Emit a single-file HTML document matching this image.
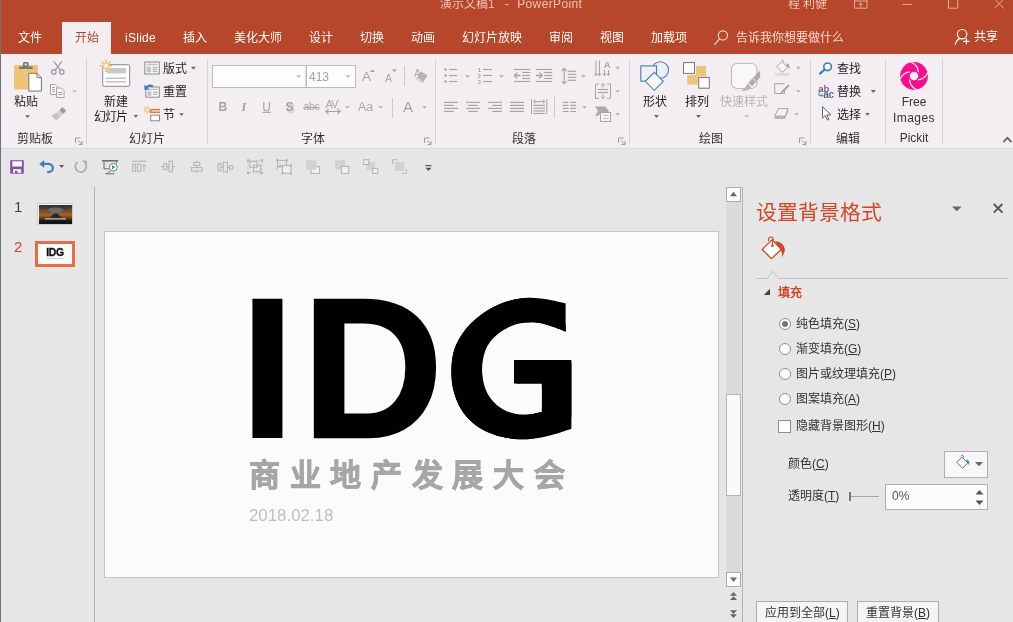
<!DOCTYPE html>
<html lang="zh-CN">
<head>
<meta charset="utf-8">
<title>演示文稿1 - PowerPoint</title>
<style>
*{box-sizing:border-box;margin:0;padding:0}
html,body{width:1013px;height:622px;overflow:hidden}
body{position:relative;background:#e6e6e6;font-family:"Liberation Sans",sans-serif;font-size:12px;color:#262626;line-height:1}
.a{position:absolute;white-space:nowrap}
.c{position:absolute;white-space:nowrap;transform:translateX(-50%);text-align:center}
svg{position:absolute;overflow:visible}
#top{left:0;top:0;width:1013px;height:54px;background:#b7472a}
#ribbon{left:0;top:54px;width:1013px;height:94px;background:#f3eef1}
#ribline{left:0;top:148px;width:1013px;height:1px;background:#dadada}
#lborder{left:0;top:0;width:1px;height:622px;background:#6f7276}
.tab{top:32px;color:#fff;font-size:12px}
.sep{width:1px;background:#d9d3d7;top:59px;height:85px}
.gl{top:133px;font-size:12px;color:#333}
.lb{font-size:12px;color:#1e1e1e}
.dis{color:#aaa}
.arr{width:0;height:0;border-left:3px solid transparent;border-right:3px solid transparent;border-top:3px solid #666}
.arr.g{border-top-color:#b0b0b0}
.pt{font-size:12px;color:#333}
.pt u{text-decoration:underline;text-underline-offset:1px}
.radio{width:12px;height:12px;border-radius:50%;border:1px solid #8e8e8e;background:#fdfdfd}
.btn{border:1px solid #adadad;background:#f4f4f4;height:24px;top:601px}
</style>
</head>
<body>
<div id="root" style="position:absolute;left:0;top:0;width:1013px;height:622px;will-change:transform">
<!-- title bar + tabs -->
<div class="a" id="top"></div>
<div class="a" style="left:440px;top:-2px;font-size:12px;color:#efc4b6" id="ttl">演示文稿1<span style="margin-left:10px">-</span><span style="margin-left:8.5px;letter-spacing:.37px">PowerPoint</span></div>
<div class="a" style="left:788px;top:-2px;font-size:12px;color:#efc4b6">程 利健</div>
<div class="a" style="left:62px;top:22px;width:49px;height:33px;background:#f3eef1"></div>
<div class="c tab" style="left:30px">文件</div>
<div class="c tab" style="left:86.5px;color:#b7472a">开始</div>
<div class="c tab" style="left:140.5px;letter-spacing:.3px">iSlide</div>
<div class="c tab" style="left:194.5px">插入</div>
<div class="c tab" style="left:257.5px">美化大师</div>
<div class="c tab" style="left:320.5px">设计</div>
<div class="c tab" style="left:372px">切换</div>
<div class="c tab" style="left:423px">动画</div>
<div class="c tab" style="left:492px">幻灯片放映</div>
<div class="c tab" style="left:561px">审阅</div>
<div class="c tab" style="left:612px">视图</div>
<div class="c tab" style="left:669px">加载项</div>
<div class="a tab" style="left:736px;color:#f6dcd3">告诉我你想要做什么</div>
<div class="a tab" style="left:974px;top:31px">共享</div>
<!--TOP-ICONS-->
<svg style="left:700px;top:0" width="313" height="54" viewBox="700 0 313 54">
<g fill="none" stroke="#e3ab9b" stroke-width="1">
<path d="M854.500 -1v9.200h12.500V-1M854.500 1h12.500M860.700 7.500V3M858.600 5l2.100-2.100 2.100 2.100"/>
<path d="M902.300 4.400h9.500"/>
<path d="M948.500 -1v9.200h9.300V-1"/>
<path d="M994.300 -1.200l9.700 9.700M1004 -1.200l-9.700 9.700"/>
</g>
<circle cx="722.900" cy="35.400" r="4.600" fill="none" stroke="#f6dcd3" stroke-width="1.200"/><path d="M719.600 38.900l-5.300 6" stroke="#f6dcd3" stroke-width="1.300"/>
<g fill="none" stroke="#fff" stroke-width="1.200"><circle cx="962.100" cy="34.200" r="4.700"/><path d="M955.300 44.800c.4-3.400 2.400-5.400 4.400-6.200M963.200 41.400h6.400M966.400 38.200v6.400"/></g>
</svg>

<!--/TOP-ICONS-->
<!-- ribbon -->
<div class="a" id="ribbon"></div>
<div class="a" id="ribline"></div>
<div class="a sep" style="left:86px"></div>
<div class="a sep" style="left:207px"></div>
<div class="a sep" style="left:435px"></div>
<div class="a sep" style="left:629px"></div>
<div class="a sep" style="left:810px"></div>
<div class="a sep" style="left:885px"></div>
<div class="a sep" style="left:942px"></div>
<div class="c gl" style="left:35px">剪贴板</div>
<div class="c gl" style="left:147px">幻灯片</div>
<div class="c gl" style="left:313px">字体</div>
<div class="c gl" style="left:524px">段落</div>
<div class="c gl" style="left:711px">绘图</div>
<div class="c gl" style="left:848px">编辑</div>
<div class="c gl" style="left:914px;font-size:12px;top:131.5px">Pickit</div>
<!--RIBBON-ICONS-->
<svg style="left:0;top:0" width="1013" height="160" viewBox="0 0 1013 160">
<rect x="14" y="65" width="24" height="24.6" rx="1.5" fill="#ecc577"/>
<path d="M19 69v-2.6h4v-3a1.3 1.3 0 0 1 1.3-1.3h3a1.3 1.3 0 0 1 1.3 1.3v3h4V69z" fill="#787878"/>
<rect x="24.7" y="63.6" width="2.2" height="1.8" fill="#f3eef1"/>
<path d="M28.8 73.3h8.2l4.4 4.4v13.4h-12.6z" fill="#fdfdfd" stroke="#777" stroke-width="1"/><path d="M37 73.3v4.4h4.4" fill="none" stroke="#777" stroke-width="1"/>
<path d="M25 115.3H30L27.5 118z" fill="#6a6a6a"/>
<g fill="none" stroke="#a4a4a4" stroke-width="1.4"><circle cx="53.8" cy="72" r="2.2"/><circle cx="61.8" cy="72" r="2.2"/><path d="M55.2 70.2L61.8 61.4M60.4 70.2L53.8 61.4"/></g>
<g fill="#faf8f9" stroke="#a4a4a4" stroke-width="1"><path d="M50.5 84.5h4.5l2 2v8h-6.5z"/><path d="M56.5 88h4.8l2.8 2.8v6.7h-7.6z"/></g>
<g stroke="#a4a4a4" stroke-width="1"><path d="M52 87.5h3M52 89.5h3M52 91.5h3M58 92.5h4.5M58 94.5h4.5"/></g>
<path d="M72.3 90.2H76.9L74.6 92.8z" fill="#bdbdbd"/>
<path d="M62.5 107l3.8 3.8-3.2 3.2-3.8-3.8z" fill="#9c9c9c"/><path d="M59 110.5l3.8 3.8-1.6 1.6-3.8-3.8z" fill="#c9c9c9"/><path d="M57 112.6l3.8 3.8-4.8 4-4.6-5z" fill="#c4c4c4"/>
<path d="M75.5 143V138H80.5" fill="none" stroke="#9a9a9a" stroke-width="1"/><path d="M78.0 140.5L81.5 144M82.0 141V144.5H78.5" fill="none" stroke="#9a9a9a" stroke-width="1"/>
<path d="M424.5 143V138H429.5" fill="none" stroke="#9a9a9a" stroke-width="1"/><path d="M427.0 140.5L430.5 144M431.0 141V144.5H427.5" fill="none" stroke="#9a9a9a" stroke-width="1"/>
<path d="M618.5 143V138H623.5" fill="none" stroke="#9a9a9a" stroke-width="1"/><path d="M621.0 140.5L624.5 144M625.0 141V144.5H621.5" fill="none" stroke="#9a9a9a" stroke-width="1"/>
<path d="M799.5 143V138H804.5" fill="none" stroke="#9a9a9a" stroke-width="1"/><path d="M802.0 140.5L805.5 144M806.0 141V144.5H802.5" fill="none" stroke="#9a9a9a" stroke-width="1"/>
<rect x="102.7" y="64.7" width="27" height="21.6" rx="1.5" fill="#fbfbfb" stroke="#8a8a8a" stroke-width="1"/>
<rect x="107" y="68" width="19" height="5.4" fill="#c9c9c9"/>
<path d="M105.8 78.2H126" stroke="#b5b5b5" stroke-width="1.15"/><path d="M105.8 81.8H126" stroke="#b5b5b5" stroke-width="1.15"/>
<circle cx="106" cy="65.9" r="3.355" fill="#f3eef1"/><path d="M108.14 65.90L112.10 65.90M107.51 67.41L110.31 70.21M106.00 68.04L106.00 72.00M104.49 67.41L101.69 70.21M103.86 65.90L99.90 65.90M104.49 64.39L101.69 61.59M106.00 63.77L106.00 59.80M107.51 64.39L110.31 61.59" stroke="#ecc577" stroke-width="1.9" fill="none"/>
<path d="M133.4 115H138.2L135.8 117.8z" fill="#6a6a6a"/>
<rect x="144.8" y="62" width="14.5" height="12" fill="#fbfbfb" stroke="#8a8a8a"/>
<rect x="146.5" y="63.6" width="11" height="1.8" fill="#c4c4c4"/><rect x="146.5" y="66.5" width="4.6" height="6" fill="#c4c4c4"/>
<path d="M152.5 67.5H157.5" stroke="#b0b0b0" stroke-width="1.15"/><path d="M152.5 69.5H157.5" stroke="#b0b0b0" stroke-width="1.15"/><path d="M152.5 71.5H157.5" stroke="#b0b0b0" stroke-width="1.15"/>
<path d="M191 66.8H195.8L193.4 69.8z" fill="#6a6a6a"/>
<rect x="145.8" y="87" width="13.5" height="10.2" fill="#fbfbfb" stroke="#8a8a8a"/>
<rect x="147.5" y="88.6" width="10" height="1.6" fill="#c4c4c4"/><rect x="147.5" y="91.3" width="4" height="4.5" fill="#c4c4c4"/>
<path d="M153 92.3H157.5" stroke="#b0b0b0" stroke-width="1.15"/><path d="M153 94.3H157.5" stroke="#b0b0b0" stroke-width="1.15"/>
<path d="M144.4 84.6v5.2h5.2l-2-2c1.2-1.3 3.4-1.6 5-.2l.8-2.2c-2.4-1.5-5.4-1.2-7.2.8z" fill="#3c7fc0"/>
<rect x="149.6" y="108.9" width="10.4" height="4" fill="#e9722a"/><rect x="151.4" y="110.4" width="8.6" height="1.2" fill="#f3eef1"/>
<rect x="150.7" y="115.2" width="8.8" height="5.6" fill="#fbfbfb" stroke="#8a8a8a"/>
<circle cx="147.2" cy="109.6" r="1.9800000000000002" fill="#f3eef1"/><path d="M148.46 109.60L150.80 109.60M148.09 110.49L149.75 112.15M147.20 110.86L147.20 113.20M146.31 110.49L144.65 112.15M145.94 109.60L143.60 109.60M146.31 108.71L144.65 107.05M147.20 108.34L147.20 106.00M148.09 108.71L149.75 107.05" stroke="#ecc577" stroke-width="1.2" fill="none"/>
<path d="M179.2 113.3H183.8L181.5 116z" fill="#6a6a6a"/>
<rect x="212.5" y="65.5" width="93.5" height="22" fill="#fdfdfd" stroke="#bcbcbc"/>
<rect x="306.5" y="65.5" width="49" height="22" fill="#fdfdfd" stroke="#bcbcbc"/>
<path d="M296.3 75.2H300.9L298.6 78z" fill="#b9b9b9"/><path d="M345.8 75.2H350.6L348.20000000000005 78z" fill="#b9b9b9"/>
<path d="M370 72H375L372.5 69.2z" fill="#a4a4a4"/><path d="M392 69.2H397L394.5 72z" fill="#a4a4a4"/>
<path d="M404.5 66.3V86.4" stroke="#cdc8cb" stroke-width="1"/><path d="M392.5 97.7V117.8" stroke="#cdc8cb" stroke-width="1"/>
<path d="M421 71.6l6.6 4-5 7.4-6.6-4z" fill="#b4b4b4"/><path d="M417.3 77.6l5.3 3.3-1.4 2.1-5.3-3.3z" fill="#d9d9d9"/>
<path d="M326 111.5h14M328.5 109l-2.7 2.5 2.7 2.5M337.5 109l2.7 2.5-2.7 2.5" fill="none" stroke="#a4a4a4" stroke-width="1.1"/>
<path d="M345 106H349.8L347.4 108.8z" fill="#b9b9b9"/><path d="M378.2 106H383L380.6 108.8z" fill="#b9b9b9"/><path d="M422.2 106H427L424.6 108.8z" fill="#b9b9b9"/>
<path d="M262.3 112.3H270.8" stroke="#a4a4a4" stroke-width="1.2"/><path d="M303 107.6H319.6" stroke="#a4a4a4" stroke-width="1"/>
<circle cx="445.5" cy="69.5" r="1.2" fill="#a4a4a4"/><path d="M449 69.5H457.2" stroke="#a4a4a4" stroke-width="1.15"/>
<path d="M483.1 69.5H492" stroke="#a4a4a4" stroke-width="1.15"/>
<circle cx="445.5" cy="75.5" r="1.2" fill="#a4a4a4"/><path d="M449 75.5H457.2" stroke="#a4a4a4" stroke-width="1.15"/>
<path d="M483.1 75.5H492" stroke="#a4a4a4" stroke-width="1.15"/>
<circle cx="445.5" cy="81.5" r="1.2" fill="#a4a4a4"/><path d="M449 81.5H457.2" stroke="#a4a4a4" stroke-width="1.15"/>
<path d="M483.1 81.5H492" stroke="#a4a4a4" stroke-width="1.15"/>
<path d="M465 75.2H470.2L467.6 78z" fill="#b9b9b9"/><path d="M498.8 75.2H504.2L501.5 78z" fill="#b9b9b9"/>
<path d="M514 69.5H530.2" stroke="#a4a4a4" stroke-width="1.15"/><path d="M514 81.5H530.2" stroke="#a4a4a4" stroke-width="1.15"/>
<path d="M522.2 72.5H530.2" stroke="#a4a4a4" stroke-width="1.15"/>
<path d="M522.2 75.5H530.2" stroke="#a4a4a4" stroke-width="1.15"/>
<path d="M522.2 78.5H530.2" stroke="#a4a4a4" stroke-width="1.15"/>
<path d="M520.5 75.5H514.5M517.2 72.6L514.3 75.5L517.2 78.4" fill="none" stroke="#a4a4a4" stroke-width="1.3"/>
<path d="M536 69.5H552.2" stroke="#a4a4a4" stroke-width="1.15"/><path d="M536 81.5H552.2" stroke="#a4a4a4" stroke-width="1.15"/>
<path d="M544.2 72.5H552.2" stroke="#a4a4a4" stroke-width="1.15"/>
<path d="M544.2 75.5H552.2" stroke="#a4a4a4" stroke-width="1.15"/>
<path d="M544.2 78.5H552.2" stroke="#a4a4a4" stroke-width="1.15"/>
<path d="M536 75.5H542M539.3 72.6L542.2 75.5L539.3 78.4" fill="none" stroke="#a4a4a4" stroke-width="1.3"/>
<path d="M564.2 68.6V83.6M561.6 71.2l2.6-2.8 2.6 2.8M561.6 81l2.6 2.8 2.6-2.8" fill="none" stroke="#a4a4a4" stroke-width="1.1"/>
<path d="M567.8 71.3H576.2" stroke="#a4a4a4" stroke-width="1.15"/>
<path d="M567.8 74.3H576.2" stroke="#a4a4a4" stroke-width="1.15"/>
<path d="M567.8 77.3H576.2" stroke="#a4a4a4" stroke-width="1.15"/>
<path d="M567.8 80.3H576.2" stroke="#a4a4a4" stroke-width="1.15"/>
<path d="M581 75.1H585.8L583.4 78z" fill="#b9b9b9"/>
<path d="M596 60.5V75.5M594.4 73.6l1.6 2 1.6-2" fill="none" stroke="#a4a4a4" stroke-width="1"/>
<path d="M599.5 60.5V75.5M597.9 73.6l1.6 2 1.6-2" fill="none" stroke="#a4a4a4" stroke-width="1"/>
<path d="M604.5 70V75.5M602.9 73.6l1.6 2 1.6-2" fill="none" stroke="#a4a4a4" stroke-width="1"/>
<path d="M608.5 70V75.5M606.9 73.6l1.6 2 1.6-2" fill="none" stroke="#a4a4a4" stroke-width="1"/>
<path d="M615.2 66.8H620L617.6 69.8z" fill="#b9b9b9"/><path d="M615.2 90H620L617.6 92.8z" fill="#b9b9b9"/><path d="M615.2 113H620L617.6 116z" fill="#b9b9b9"/>
<path d="M599 84h-3.5v14.4h3.5M607 84h3.5v14.4h-3.5" fill="none" stroke="#a4a4a4" stroke-width="1"/>
<path d="M598 89.5H608" stroke="#a4a4a4" stroke-width="1.15"/><path d="M598 92.5H608" stroke="#a4a4a4" stroke-width="1.15"/>
<path d="M603 83.6v4M601.2 85.4l1.8-2 1.8 2M603 94.5v4M601.2 96.6l1.8 2 1.8-2" fill="none" stroke="#a4a4a4" stroke-width="1"/>
<path d="M595 106.4h10l4 4.6-1.5 1.8H601l-2.5 3H595l3-4.7z" fill="#ababab"/>
<rect x="600.5" y="112.5" width="10" height="9" fill="#f8f6f7" stroke="#a4a4a4"/>
<path d="M603 115.5H608.5" stroke="#c4c4c4" stroke-width="1.15"/><path d="M603 118.5H608.5" stroke="#c4c4c4" stroke-width="1.15"/>
<path d="M444.1 102.4H458" stroke="#a4a4a4" stroke-width="1.15"/><path d="M444.1 105.4H453.83" stroke="#a4a4a4" stroke-width="1.15"/><path d="M444.1 108.4H458" stroke="#a4a4a4" stroke-width="1.15"/><path d="M444.1 111.4H453.83" stroke="#a4a4a4" stroke-width="1.15"/><path d="M466 102.4H479.9" stroke="#a4a4a4" stroke-width="1.15"/><path d="M468.085 105.4H477.815" stroke="#a4a4a4" stroke-width="1.15"/><path d="M466 108.4H479.9" stroke="#a4a4a4" stroke-width="1.15"/><path d="M468.085 111.4H477.815" stroke="#a4a4a4" stroke-width="1.15"/><path d="M488.1 102.4H502" stroke="#a4a4a4" stroke-width="1.15"/><path d="M492.27000000000004 105.4H502" stroke="#a4a4a4" stroke-width="1.15"/><path d="M488.1 108.4H502" stroke="#a4a4a4" stroke-width="1.15"/><path d="M492.27000000000004 111.4H502" stroke="#a4a4a4" stroke-width="1.15"/><path d="M510 102.4H524" stroke="#a4a4a4" stroke-width="1.15"/><path d="M510 105.4H524" stroke="#a4a4a4" stroke-width="1.15"/><path d="M510 108.4H524" stroke="#a4a4a4" stroke-width="1.15"/><path d="M510 111.4H524" stroke="#a4a4a4" stroke-width="1.15"/>
<path d="M531.5 99V114" stroke="#a4a4a4" stroke-width="1"/><path d="M546.8 99V114" stroke="#a4a4a4" stroke-width="1"/>
<path d="M533.5 101.6h11.4M535.7 99.6l-2.2 2 2.2 2M542.7 99.6l2.2 2-2.2 2" fill="none" stroke="#a4a4a4" stroke-width="1"/>
<path d="M533.3 105.4H545" stroke="#a4a4a4" stroke-width="1.15"/>
<path d="M533.3 108.2H545" stroke="#a4a4a4" stroke-width="1.15"/>
<path d="M533.3 111H545" stroke="#a4a4a4" stroke-width="1.15"/>
<path d="M533.3 113.5H545" stroke="#a4a4a4" stroke-width="1.15"/>
<path d="M554.5 97V117.8" stroke="#cdc8cb" stroke-width="1"/>
<path d="M562.8 102.4H568.5" stroke="#a4a4a4" stroke-width="1.15"/><path d="M570.2 102.4H576" stroke="#a4a4a4" stroke-width="1.15"/>
<path d="M562.8 105.4H568.5" stroke="#a4a4a4" stroke-width="1.15"/><path d="M570.2 105.4H576" stroke="#a4a4a4" stroke-width="1.15"/>
<path d="M562.8 108.4H568.5" stroke="#a4a4a4" stroke-width="1.15"/><path d="M570.2 108.4H576" stroke="#a4a4a4" stroke-width="1.15"/>
<path d="M562.8 111.5H568.5" stroke="#a4a4a4" stroke-width="1.15"/><path d="M570.2 111.5H576" stroke="#a4a4a4" stroke-width="1.15"/>
<path d="M582.2 105.9H587L584.6 108.8z" fill="#b9b9b9"/>
<circle cx="660.2" cy="70" r="8.3" fill="none" stroke="#3c7fc0" stroke-width="1.1"/>
<rect x="640.8" y="65.9" width="15.7" height="15.3" fill="#f3eef1" stroke="#3c7fc0" stroke-width="1.1"/>
<path d="M654.3 72.3l9 9-9 9-9-9z" fill="#fbf9fa" stroke="#3c7fc0" stroke-width="1.1"/>
<path d="M654 115H659L656.5 117.9z" fill="#6a6a6a"/><path d="M696 115H701L698.5 117.9z" fill="#6a6a6a"/><path d="M744 115H749.2L746.6 117.9z" fill="#c4c4c4"/>
<rect x="696" y="65.9" width="10.1" height="10.4" fill="#ecc577"/><rect x="687.2" y="75.1" width="10.6" height="9.5" fill="#ecc577"/>
<rect x="683.5" y="62.6" width="11" height="10.8" fill="#fdfdfd" stroke="#777"/>
<rect x="698.7" y="77.4" width="10.6" height="10.8" fill="#fdfdfd" stroke="#777"/>
<rect x="731.5" y="63.5" width="25.5" height="25" rx="5.5" fill="#f9f7f8" stroke="#bdbdbd" stroke-width="1.1"/>
<path d="M760 70.4l.2 6.8-8 9-4-3.4z" fill="#aeaeae"/><path d="M747.4 83.6l4 3.4c-1.5 2.8-5 4-10.6 4 4-1.6 4.8-4.6 6.6-7.4z" fill="#b6b6b6"/><path d="M752.6 78.3l3 2.6" stroke="#f3eef1" stroke-width="1"/>
<path d="M782 61.5l5.7 5.7-5.2 5.2-5.7-5.7z" fill="#f8f6f7" stroke="#a4a4a4" stroke-width="1"/><path d="M781.5 60.3c1.5-.8 2.6.4 2.2 2.4" fill="none" stroke="#a4a4a4"/><path d="M786.5 63c2.6.8 3.6 3.4 3.2 6.6-.8-2.2-1.6-2.8-3-3.4z" fill="#a4a4a4"/>
<rect x="775" y="73" width="14.4" height="2.7" fill="#dcd9da"/>
<path d="M784.5 83.7h-9.8v9.8h9.8v-3" fill="none" stroke="#a4a4a4" stroke-width="1"/><path d="M788.2 84.4l1.4 1.4-7 7-2.6 1 1.2-2.4z" fill="#a4a4a4"/>
<path d="M774.5 116.2l4-7.6h9.6l-3 7.6z" fill="#f3f1f2" stroke="#a4a4a4" stroke-width="1"/><path d="M774.5 116.2h10.6l3-7.6v2.8l-3 7.6h-10.6z" fill="#b5b5b5"/>
<path d="M796 66.8H800.8L798.4 69.8z" fill="#b9b9b9"/><path d="M796 90H800.8L798.4 92.8z" fill="#b9b9b9"/><path d="M794 113H798.8L796.4 115.8z" fill="#b9b9b9"/>
<circle cx="827.6" cy="66.8" r="3.8" fill="#fbf9fa" stroke="#3c7fc0" stroke-width="1.6"/><path d="M824.6 69.6l-4.6 4" stroke="#3c7fc0" stroke-width="2.2" stroke-linecap="round"/>
<path d="M819 92v3.4h3.6M821.2 93.9l1.5 1.5-1.5 1.5" fill="none" stroke="#3c7fc0" stroke-width="1"/>
<path d="M822.5 106.5v11.6l2.8-2.6 2 4.6 1.6-.7-2-4.5h3.8z" fill="#fdfdfd" stroke="#666" stroke-width="1"/>
<path d="M870.8 90H875.8L873.3 92.9z" fill="#6a6a6a"/><path d="M865.1 113H869.9L867.5 115.8z" fill="#6a6a6a"/>
<path d="M1003.3 142.2l4.1-4.4 4.1 4.4" fill="none" stroke="#666" stroke-width="1.9"/>
<circle cx="914" cy="76" r="13.9" fill="#ff0a8c"/><circle cx="914" cy="76" r="4.3" fill="#f3eef1"/>
<g fill="none" stroke="#f3eef1" stroke-width="1.3" transform="translate(914 76)"><path d="M-3-13.9Q4-11 4.3-3.8"/><path d="M13.8-3.4Q11 3.4 4 3.8"/><path d="M2.8 13.8Q-3.8 11-4.5 3.4"/><path d="M-13.7 3Q-11-3.6-4.3-4.2"/></g>
</svg>
<div class="c lb" style="left:26px;top:96px">粘贴</div>
<div class="c lb" style="left:116px;top:96px">新建</div>
<div class="a lb" style="left:93.700px;top:111px;letter-spacing:-.700px">幻灯片</div>
<div class="a lb" style="left:163px;top:63px">版式</div>
<div class="a lb" style="left:163px;top:86px">重置</div>
<div class="a lb" style="left:163px;top:109px">节</div>
<div class="a" style="left:309px;top:71px;font-size:12px;color:#a3a3a3">413</div>
<div class="a" style="left:362px;top:69.5px;font-size:13.5px;color:#a9a9a9">A</div>
<div class="a" style="left:385px;top:73px;font-size:10.5px;color:#a9a9a9">A</div>
<div class="a" style="left:414px;top:68px;font-size:10.5px;color:#a9a9a9">A</div>
<div class="a" style="left:218.5px;top:100.5px;font-size:12px;font-weight:bold;color:#a3a3a3">B</div>
<div class="a" style="left:241.5px;top:100.5px;font-size:12px;font-style:italic;font-family:'Liberation Serif',serif;font-weight:bold;color:#a3a3a3">I</div>
<div class="a" style="left:262.3px;top:100.5px;font-size:12px;color:#a3a3a3">U</div>
<div class="a" style="left:285.5px;top:100.5px;font-size:12.5px;font-weight:bold;color:#a3a3a3;text-shadow:1.5px 1.5px 1px #d0d0d0">S</div>
<div class="a" style="left:303.5px;top:101px;font-size:10.5px;color:#a9a9a9;letter-spacing:-.3px">abc</div>
<div class="a" style="left:325.5px;top:98.5px;font-size:11px;color:#a9a9a9;letter-spacing:-.8px">AV</div>
<div class="a" style="left:358px;top:101px;font-size:12.5px;color:#a9a9a9">Aa</div>
<div class="a" style="left:403px;top:98.5px;font-size:15px;color:#a3a3a3">A</div>
<div class="a" style="left:477.800px;top:67.300px;font-size:5.600px;color:#a3a3a3;line-height:6px;font-weight:bold">1<br>2<br>3</div>
<div class="a" style="left:603.800px;top:59.500px;font-size:9.500px;font-weight:bold;color:#a9a9a9">A</div>
<div class="c lb" style="left:655px;top:96px">形状</div>
<div class="c lb" style="left:697px;top:96px">排列</div>
<div class="c lb" style="left:744.3px;top:96px;color:#b4b4b4">快速样式</div>
<div class="a lb" style="left:837px;top:63px">查找</div>
<div class="a lb" style="left:837px;top:86px">替换</div>
<div class="a lb" style="left:837px;top:109px">选择</div>
<div class="a" style="left:818.300px;top:83.500px;font-size:9.500px;font-weight:bold;color:#606060">a<span style="color:#9b4fb5">b</span></div>
<div class="a" style="left:823.200px;top:90px;font-size:10px;font-weight:bold;color:#606060;letter-spacing:-.200px">a<span style="color:#3c7fc0">c</span></div>
<div class="c" style="left:914px;top:95.5px;font-size:12px;color:#333">Free</div>
<div class="c" style="left:914px;top:112px;font-size:12px;letter-spacing:.4px;color:#333">Images</div>
<!--/RIBBON-ICONS-->
<!--QAT-->
<svg style="left:0;top:150px" width="460" height="40" viewBox="0 150 460 40">
<!-- save -->
<rect x="10.200" y="160.200" width="13.600" height="13.500" fill="#8a4dae"/><rect x="12.300" y="161.300" width="9.600" height="5.200" fill="#fbfbfb"/><rect x="13" y="169.200" width="8.200" height="3.600" fill="#fbfbfb"/><rect x="15" y="170.800" width="2.400" height="2.900" fill="#8a4dae"/>
<!-- undo -->
<path d="M39.200 163.900l5-3.800v7.600z" fill="#3c7fc0"/><path d="M43.500 163.900h4.300c3 0 5.100 1.800 5.100 4.200s-2 4-4.400 4h-1.300" fill="none" stroke="#3c7fc0" stroke-width="2.200"/>
<path d="M59 165h5.200l-2.600 3z" fill="#5e5e5e"/>
<!-- redo (disabled) -->
<path d="M77.600 162a5.500 5.500 0 1 0 7.600 1.200" fill="none" stroke="#b0b0b0" stroke-width="1.900"/><path d="M81.800 160.400h5.100v4.600z" fill="#b0b0b0"/>
<!-- slideshow -->
<path d="M102 160.800h16.200" stroke="#666" stroke-width="1.500"/><path d="M104 161.500v7.300h5M116.300 161.500v2" fill="none" stroke="#666" stroke-width="1"/><circle cx="113.300" cy="167.300" r="3.900" fill="#fbfbfb" stroke="#777" stroke-width="1"/><path d="M112 165.100l3.400 2.200-3.400 2.200z" fill="#3a9a74"/><path d="M105.200 173.800h9M110 171l-2.400 2.800" stroke="#666" stroke-width="1" fill="none"/>
<g fill="none" stroke="#b2b2b2" stroke-width="1">
<!-- align top -->
<path d="M131.800 161.200h14.600"/><rect x="132.800" y="164" width="2.600" height="7.400"/><rect x="137.300" y="164" width="3.400" height="7.400"/><path d="M144 171.600v-7M142 166.300l2-2 2 2"/>
<!-- align middle -->
<path d="M161.200 166.600h13.800"/><rect x="163.800" y="163.600" width="3" height="6" fill="#e6e6e6"/><rect x="169" y="161.200" width="3.400" height="10.600" fill="#e6e6e6"/>
<!-- align center -->
<path d="M196.700 160.300v13.200"/><rect x="193.800" y="162.400" width="6" height="3" fill="#e6e6e6"/><rect x="191.400" y="167.600" width="10.800" height="3.400" fill="#e6e6e6"/>
<!-- distribute h -->
<rect x="218.100" y="163.800" width="2.800" height="7"/><rect x="223.200" y="162.400" width="4.200" height="9.600"/><rect x="229.600" y="165.600" width="3.200" height="3.600"/><path d="M221 167.400h2.200M227.400 167.400h2.200"/>
<!-- group -->
<rect x="250" y="161.400" width="7" height="6"/><rect x="253.600" y="165.200" width="7" height="6.400"/>
</g>
<g fill="#b2b2b2"><rect x="247" y="159.300" width="2.400" height="2.400"/><rect x="260.600" y="159.300" width="2.400" height="2.400"/><rect x="247" y="171.800" width="2.400" height="2.400"/><rect x="260.600" y="171.800" width="2.400" height="2.400"/></g>
<path d="M248.200 162v9.600M261.800 162v9.600M249.600 160.500h10.800M249.600 173h10.800" stroke="#c4c4c4" stroke-width="1" stroke-dasharray="1.500 1.500"/>
<!-- regroup -->
<g fill="none" stroke="#b2b2b2" stroke-width="1"><rect x="277.500" y="160.400" width="9" height="6.400"/><rect x="282.500" y="165.600" width="8.500" height="7.600" fill="#eee"/><path d="M276.600 170c0-3 1.600-4.200 4.400-4.200M279.400 163.800l2 2-2 2"/></g>
<g fill="#b2b2b2"><rect x="276.200" y="159.200" width="2.200" height="2.200"/><rect x="285.600" y="159.200" width="2.200" height="2.200"/><rect x="289.800" y="164.400" width="2.200" height="2.200"/><rect x="289.800" y="172.300" width="2.200" height="2.200"/><rect x="281.400" y="172.300" width="2.200" height="2.200"/></g>
<!-- bring forward -->
<rect x="311" y="166.600" width="8.600" height="6.800" fill="#efefef" stroke="#b2b2b2"/><rect x="306.200" y="160.300" width="10" height="9.300" fill="#d2d2d2"/>
<!-- send backward -->
<rect x="335.200" y="160.300" width="10" height="9.300" fill="#d2d2d2"/><rect x="341.400" y="166.400" width="7.400" height="7" fill="#efefef" stroke="#b2b2b2"/>
<!-- bring to front -->
<rect x="366.400" y="162.200" width="8.400" height="8.200" fill="#d2d2d2"/><rect x="363.600" y="159.700" width="5.200" height="4.800" fill="#efefef" stroke="#b2b2b2"/><rect x="372.600" y="168.600" width="5.200" height="4.800" fill="#efefef" stroke="#b2b2b2"/>
<!-- send to back -->
<path d="M397 159.700h-4.400v4.400M406.400 169.400v4h-4.400" fill="none" stroke="#b2b2b2"/><rect x="395" y="162" width="9.400" height="9" fill="#d2d2d2"/>
<!-- customize -->
<path d="M425.500 165.600h6" stroke="#555" stroke-width="1.200"/><path d="M425.500 167.800h6l-3 3.200z" fill="#555"/>
</svg>

<!--/QAT-->
<!-- thumbnails -->
<div class="a" style="left:94px;top:187px;width:1px;height:435px;background:#b4b4b4"></div>
<div class="a" style="left:14px;top:199px;font-size:15px;color:#444">1</div>
<div class="a" style="left:14px;top:239px;font-size:15px;color:#d24726">2</div>
<div class="a" id="th1" style="left:37px;top:203px;width:36px;height:22px;border:1px solid #cdcdcd;background:#f4f4f4"></div>
<svg style="left:38.500px;top:204.500px" width="33" height="19" viewBox="0 0 33 19"><defs><linearGradient id="sk" x1="0" y1="0" x2="0" y2="1"><stop offset="0" stop-color="#2c3038"/><stop offset=".45" stop-color="#5a4a40"/><stop offset="1" stop-color="#17171a"/></linearGradient><linearGradient id="mt" x1="0" y1="0" x2="0" y2="1"><stop offset="0" stop-color="#5a3a22"/><stop offset=".6" stop-color="#a0642a"/><stop offset="1" stop-color="#3a2a1c"/></linearGradient></defs><rect width="33" height="19" fill="url(#sk)"/><ellipse cx="16.500" cy="6" rx="9" ry="3.500" fill="#8a8684" opacity=".6"/><path d="M0 2.500L9 5.500 15 8.500 12 12 0 15z" fill="url(#mt)"/><path d="M33 2.500L25 5 18.500 8.500 21.500 12 33 15z" fill="url(#mt)"/><path d="M15 8.500h3.500L27 19H6z" fill="#26262a"/><rect x="0" y="15.500" width="33" height="3.500" fill="#141416"/><rect x="6" y="13.200" width="21" height="1.300" fill="#d8d4cc" opacity=".85"/></svg>
<div class="a" id="th2" style="left:35px;top:241px;width:40px;height:26px;border:3px solid #ec6b47;background:#fbfbfb"></div>
<div class="a" style="left:46.200px;top:247.500px;font-size:10.300px;font-weight:bold;color:#111;letter-spacing:-.2px;-webkit-text-stroke:.35px #111">IDG</div>
<div class="a" style="left:46.500px;top:257.500px;width:17px;height:1px;background:#cfcfcf"></div>
<!-- slide -->
<div class="a" id="slide" style="left:104px;top:231px;width:615px;height:347px;background:#fbfbfb;border:1px solid #c6c6c8"></div>
<div id="idg" style="position:absolute;left:0;top:0;font-size:200px;font-weight:bold;color:#000;line-height:1"><span class="a" style="left:0;top:0;transform-origin:0 0;transform:translate(238.5px,267.1px) scale(1.041,1.0116)">I</span><span class="a" style="left:0;top:0;transform-origin:0 0;-webkit-text-stroke:2.5px #000;transform:translate(302px,268.9px) scale(0.977,0.9936)">D</span><svg style="left:0;top:0" width="1013" height="622" viewBox="0 0 1013 622"><path d="M565.6 303.3C563.5 302.8 556.9 301.2 552.8 300.4C548.7 299.6 544.6 298.9 540.8 298.5C537.0 298.0 533.6 297.8 530.0 297.8C526.3 297.8 522.9 298.1 519.1 298.7C515.2 299.3 511.1 300.2 507.0 301.5C502.8 302.9 498.3 304.6 494.0 306.8C489.8 308.9 485.5 311.5 481.7 314.3C477.8 317.1 474.1 320.2 470.8 323.5C467.6 326.8 464.7 330.3 462.2 333.9C459.7 337.4 457.7 341.1 456.1 345.0C454.5 348.8 453.4 352.8 452.6 356.9C451.8 360.9 451.5 365.2 451.4 369.3C451.3 373.5 451.5 377.6 451.9 381.7C452.4 385.7 453.1 389.6 454.3 393.5C455.4 397.4 456.9 401.3 458.8 405.0C460.7 408.7 463.1 412.4 465.9 415.7C468.7 419.0 471.9 422.2 475.5 424.9C479.1 427.6 483.2 429.9 487.4 431.9C491.7 433.8 496.3 435.4 500.8 436.5C505.4 437.7 510.0 438.4 514.5 438.9C519.0 439.4 523.4 439.5 527.9 439.2C532.4 439.0 536.8 438.4 541.5 437.5C546.3 436.6 551.2 435.3 556.2 433.8C561.2 432.3 568.9 429.6 571.4 428.7V359.9H514V383.6H541.9V411.9C540.6 412.2 536.9 413.2 534.3 413.7C531.8 414.2 529.3 414.7 526.7 414.8C524.0 414.9 521.4 414.9 518.5 414.4C515.7 414.0 512.6 413.3 509.6 412.2C506.7 411.1 503.5 409.7 500.8 407.9C498.0 406.1 495.4 404.0 493.2 401.6C491.0 399.2 489.2 396.5 487.6 393.7C486.1 390.8 484.9 387.7 484.0 384.5C483.2 381.3 482.6 377.9 482.3 374.5C482.0 371.2 482.0 367.7 482.3 364.4C482.6 361.1 483.2 357.7 484.0 354.7C484.9 351.6 486.0 348.7 487.4 346.1C488.8 343.5 490.4 341.2 492.4 339.0C494.3 336.8 496.7 334.8 499.1 332.9C501.6 331.1 504.5 329.3 507.3 327.9C510.1 326.4 513.2 325.2 516.2 324.3C519.1 323.4 522.2 322.9 525.1 322.6C528.0 322.3 530.6 322.2 533.5 322.3C536.4 322.5 539.1 322.9 542.4 323.6C545.6 324.4 549.2 325.5 553.1 326.8C557.0 328.1 563.5 330.8 565.6 331.6Z" fill="#000"/></svg><div style="position:absolute;left:0;top:0;width:1013px;height:622px;clip-path:path('M565.6 303.3C563.5 302.8 556.9 301.2 552.8 300.4C548.7 299.6 544.6 298.9 540.8 298.5C537.0 298.0 533.6 297.8 530.0 297.8C526.3 297.8 522.9 298.1 519.1 298.7C515.2 299.3 511.1 300.2 507.0 301.5C502.8 302.9 498.3 304.6 494.0 306.8C489.8 308.9 485.5 311.5 481.7 314.3C477.8 317.1 474.1 320.2 470.8 323.5C467.6 326.8 464.7 330.3 462.2 333.9C459.7 337.4 457.7 341.1 456.1 345.0C454.5 348.8 453.4 352.8 452.6 356.9C451.8 360.9 451.5 365.2 451.4 369.3C451.3 373.5 451.5 377.6 451.9 381.7C452.4 385.7 453.1 389.6 454.3 393.5C455.4 397.4 456.9 401.3 458.8 405.0C460.7 408.7 463.1 412.4 465.9 415.7C468.7 419.0 471.9 422.2 475.5 424.9C479.1 427.6 483.2 429.9 487.4 431.9C491.7 433.8 496.3 435.4 500.8 436.5C505.4 437.7 510.0 438.4 514.5 438.9C519.0 439.4 523.4 439.5 527.9 439.2C532.4 439.0 536.8 438.4 541.5 437.5C546.3 436.6 551.2 435.3 556.2 433.8C561.2 432.3 568.9 429.6 571.4 428.7V359.9H514V383.6H541.9V411.9C540.6 412.2 536.9 413.2 534.3 413.7C531.8 414.2 529.3 414.7 526.7 414.8C524.0 414.9 521.4 414.9 518.5 414.4C515.7 414.0 512.6 413.3 509.6 412.2C506.7 411.1 503.5 409.7 500.8 407.9C498.0 406.1 495.4 404.0 493.2 401.6C491.0 399.2 489.2 396.5 487.6 393.7C486.1 390.8 484.9 387.7 484.0 384.5C483.2 381.3 482.6 377.9 482.3 374.5C482.0 371.2 482.0 367.7 482.3 364.4C482.6 361.1 483.2 357.7 484.0 354.7C484.9 351.6 486.0 348.7 487.4 346.1C488.8 343.5 490.4 341.2 492.4 339.0C494.3 336.8 496.7 334.8 499.1 332.9C501.6 331.1 504.5 329.3 507.3 327.9C510.1 326.4 513.2 325.2 516.2 324.3C519.1 323.4 522.2 322.9 525.1 322.6C528.0 322.3 530.6 322.2 533.5 322.3C536.4 322.5 539.1 322.9 542.4 323.6C545.6 324.4 549.2 325.5 553.1 326.8C557.0 328.1 563.5 330.8 565.6 331.6Z')"><span class="a" style="left:0;top:0;transform-origin:0 0;-webkit-text-stroke:4px #000;transform:translate(445px,269.3px) scale(0.877,0.9904)">G</span></div></div>
<div class="a" id="sub" style="left:249px;top:460px;font-size:31px;font-weight:bold;-webkit-text-stroke:.8px #a6a6a6;color:#a6a6a6;letter-spacing:9.7px">商业地产发展大会</div>
<div class="a" id="date" style="left:249px;top:507px;font-size:17.4px;color:#bfbfbf;transform-origin:0 0;transform:scaleX(.968)">2018.02.18</div>
<!-- scrollbar -->
<div class="a" style="left:726px;top:187px;width:15px;height:400px;background:#dbdbdb"></div>
<div class="a" style="left:742px;top:187px;width:1px;height:435px;background:#b2b2b2"></div>
<div class="a" style="left:726px;top:187px;width:15px;height:15px;background:#fbfbfb;border:1px solid #ababab"></div>
<div class="a" style="left:726px;top:572px;width:15px;height:15px;background:#fbfbfb;border:1px solid #ababab"></div>
<div class="a" style="left:726px;top:394px;width:15px;height:102px;background:#fafafa;border:1px solid #b5b5b5"></div>
<!--SCROLL-ICONS-->
<svg style="left:720px;top:185px" width="30" height="437" viewBox="720 185 30 437">
<path d="M730 196.200h7l-3.500-4.400z" fill="#6a6a6a"/>
<path d="M730 577.500h7l-3.500 4.400z" fill="#6a6a6a"/>
<path d="M730 595.700h7l-3.500-3.700zM730 599.900h7l-3.500-3.700z" fill="#666"/>
<path d="M730 610.200h7l-3.500 3.700zM730 614.300h7l-3.500 3.700z" fill="#666"/>
</svg>

<!--/SCROLL-ICONS-->
<!-- format pane -->
<div class="a" style="left:756px;top:203px;font-size:20.8px;font-weight:300;color:#d24726" id="ptitle">设置背景格式</div>
<div class="a" style="left:756px;top:278px;width:252px;height:1px;background:#c6c6c6"></div>
<div class="a" style="left:778px;top:287px;font-size:12px;font-weight:bold;color:#d24726">填充</div>
<div class="a radio" style="left:779px;top:318px"></div>
<div class="a" style="left:782px;top:321px;width:6px;height:6px;border-radius:50%;background:#777"></div>
<div class="a radio" style="left:779px;top:343px"></div>
<div class="a radio" style="left:779px;top:368px"></div>
<div class="a radio" style="left:779px;top:393px"></div>
<div class="a" style="left:778px;top:420px;width:13px;height:13px;border:1px solid #8e8e8e;background:#fdfdfd"></div>
<div class="a pt" style="left:796px;top:318px">纯色填充(<u>S</u>)</div>
<div class="a pt" style="left:796px;top:343px">渐变填充(<u>G</u>)</div>
<div class="a pt" style="left:796px;top:368px">图片或纹理填充(<u>P</u>)</div>
<div class="a pt" style="left:796px;top:393px">图案填充(<u>A</u>)</div>
<div class="a pt" style="left:796px;top:420px">隐藏背景图形(<u>H</u>)</div>
<div class="a pt" style="left:788px;top:458px">颜色(<u>C</u>)</div>
<div class="a pt" style="left:788px;top:490px">透明度(<u>T</u>)</div>
<div class="a" style="left:944px;top:451px;width:44px;height:27px;border:1px solid #b0b0b0;background:#f7f7f7"></div>
<div class="a" style="left:885px;top:484px;width:103px;height:26px;border:1px solid #b0b0b0;background:#fbfbfb"></div>
<div class="a pt" style="left:892px;top:490px;color:#555">0%</div>
<div class="a" style="left:849px;top:492px;width:2px;height:9px;background:#777"></div>
<div class="a" style="left:851px;top:496px;width:28px;height:1px;background:#a5a5a5"></div>
<div class="a btn" style="left:756px;width:92px"></div>
<div class="a btn" style="left:857px;width:82px"></div>
<div class="a pt" style="left:765px;top:607px">应用到全部(<u>L</u>)</div>
<div class="a pt" style="left:866px;top:607px">重置背景(<u>B</u>)</div>
<!--PANE-ICONS-->
<svg style="left:745px;top:195px" width="268" height="427" viewBox="745 195 268 427">
<path d="M952 206.500h9.600l-4.800 4.800z" fill="#666"/>
<path d="M993.800 204l8.600 8.600M1002.400 204l-8.600 8.600" stroke="#555" stroke-width="1.800"/>
<!-- bucket -->
<path d="M772 239.800l9.300 9.600-9.800 9.300-9.300-9.300z" fill="#fdfdfd" stroke="#d24726" stroke-width="1.300"/>
<path d="M768.600 241c-.6-2.600.8-4 2.400-4 1.500 0 2.400 1.200 2.200 3" fill="none" stroke="#d24726" stroke-width="1.200"/>
<path d="M772.400 240v5" stroke="#d24726" stroke-width="1"/><circle cx="772.400" cy="245.700" r="1.300" fill="#d24726"/>
<path d="M775 241.200c5.600.4 9.600 3.800 9.800 8.400 0 3-1.400 5.200-2.900 7.600.3-3.400.2-5.600-1.500-7.800z" fill="#d24726"/>
<!-- separator notch -->
<path d="M766.800 279l6-7.800 6 7.800" fill="#e6e6e6" stroke="#c0c0c0" stroke-width="1"/>
<path d="M767.600 278.500h10.400" stroke="#e6e6e6" stroke-width="1.400"/>
<!-- triangle -->
<path d="M770 288.800v6.200h-6.200z" fill="#444"/>
<!-- color button bucket -->
<path d="M962 457.200l5.800 5.800-5.200 5.200-5.800-5.800z" fill="#fdfdfd" stroke="#666" stroke-width="1"/><path d="M961.200 456.300c.6-1.600 2.400-1.200 2.400 1" fill="none" stroke="#666" stroke-width="1"/><path d="M966.600 459.200c2.400.8 3.200 3.200 2.800 6.600-.6-2-1.500-3-2.800-3.600z" fill="#3c7fc0"/>
<path d="M975 462h8l-4 4.300z" fill="#666"/>
<!-- spin arrows -->
<path d="M975.500 494.600h8l-4-4.500z" fill="#555"/><path d="M975.500 500.400h8l-4 4.500z" fill="#555"/>
</svg>

<!--/PANE-ICONS-->
<div class="a" id="lborder"></div>
</div>
</body>
</html>
